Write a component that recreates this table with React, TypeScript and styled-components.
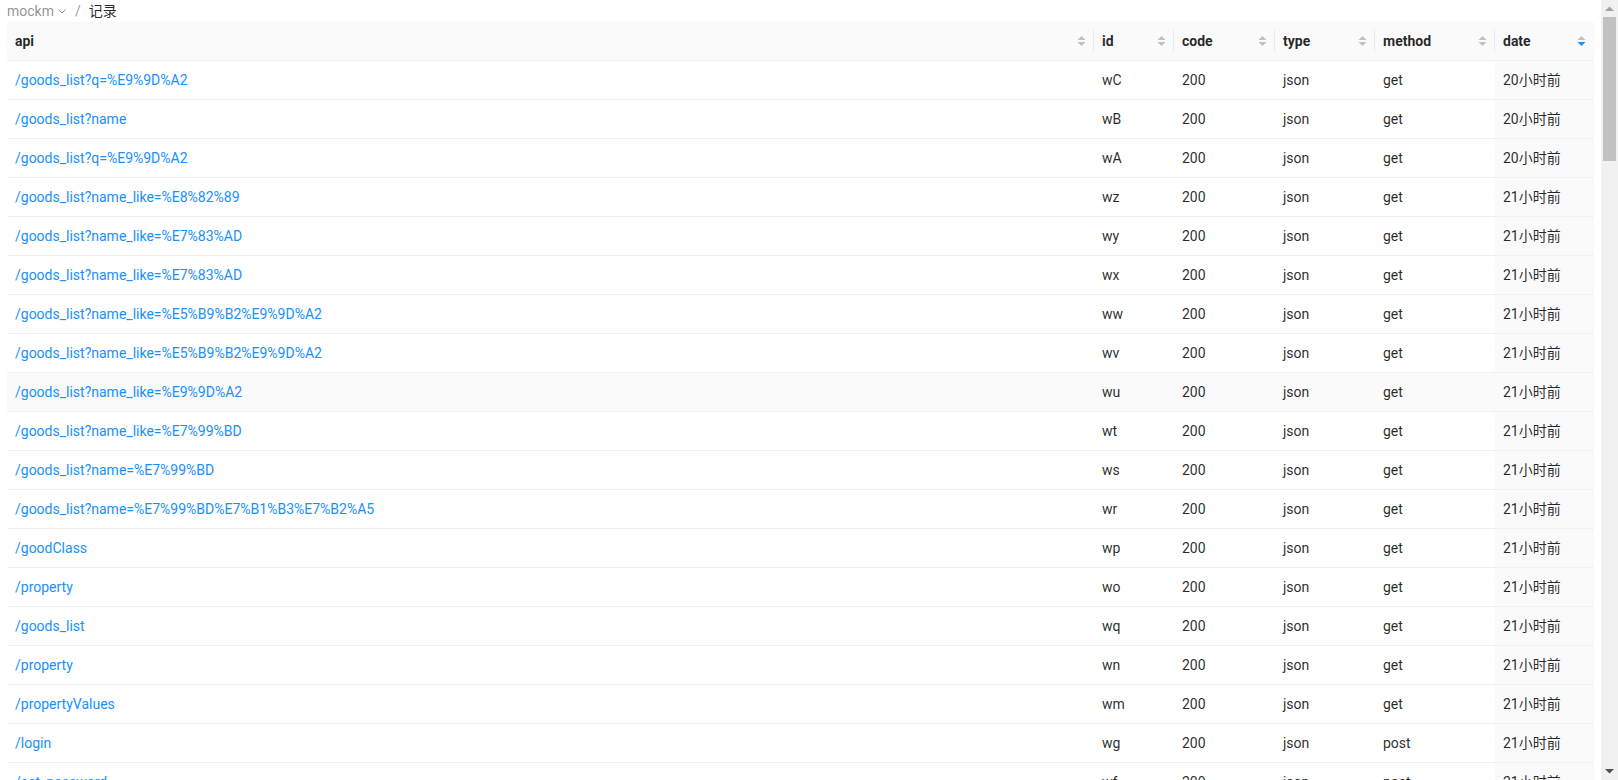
import React from "react";
import styled, { createGlobalStyle } from "styled-components";

const GlobalStyle = createGlobalStyle`
   html, body {
      margin: 0;
      padding: 0;
      background: #fff;
      overflow: hidden;
   }
   body {
      font-family: Roboto, "Noto Sans CJK SC", sans-serif;
      font-size: 14px;
      color: rgba(0, 0, 0, 0.85);
   }
`;

const Shell = styled.div`
   display: flex;
   height: 100vh;
   overflow: hidden;
`;

const Page = styled.main`
   flex: 1;
   min-width: 0;
   padding: 0 7px;
   overflow: hidden;
`;

// fake window scrollbar, the headless browser draws none
const ScrollBar = styled.div`
   width: 17px;
   flex: none;
   display: flex;
   flex-direction: column;
   background: #f1f1f1;
`;

const ScrollButton = styled.div`
   height: 17px;
   display: flex;
   align-items: center;
   justify-content: center;
`;

const ScrollTrack = styled.div`
   flex: 1;
   padding: 0 2px;
`;

const ScrollThumb = styled.div`
   height: 144px;
   background: #c1c1c1;
`;

const Crumbs = styled.div`
   display: flex;
   align-items: center;
   height: 22px;
   line-height: 22px;
   color: rgba(0, 0, 0, 0.45);
`;

const CrumbLink = styled.span`
   display: inline-flex;
   align-items: center;
   gap: 3px;
`;

const CrumbSep = styled.span`
   margin: 0 8px;
`;

const CrumbCurrent = styled.span`
   color: rgba(0, 0, 0, 0.85);
`;

const Table = styled.table`
   width: 100%;
   border-collapse: separate;
   border-spacing: 0;
   table-layout: fixed;
`;

const Th = styled.th`
   position: relative;
   padding: 8px;
   text-align: left;
   font-weight: 700;
   line-height: 22px;
   background: #fafafa;
   border-bottom: 1px solid #f0f0f0;
   &:not(:last-child)::before {
      content: "";
      position: absolute;
      top: 50%;
      right: 0;
      width: 1px;
      height: 1.6em;
      transform: translateY(-50%);
      background: rgba(0, 0, 0, 0.06);
   }
`;

const ThInner = styled.div`
   display: flex;
   align-items: center;
   justify-content: space-between;
`;

const Tr = styled.tr<{ $hover?: boolean }>`
   background: ${({ $hover }) => ($hover ? "#fafafa" : "#fff")};
`;

const Td = styled.td<{ $sorted?: boolean }>`
   padding: 8px;
   line-height: 22px;
   border-bottom: 1px solid #f0f0f0;
   white-space: nowrap;
   overflow: hidden;
   background: ${({ $sorted }) => ($sorted ? "#fafafa" : "transparent")};
`;

const ApiLink = styled.a`
   color: #1890ff;
   text-decoration: none;
`;

const Sorter = ({ active }: { active?: "asc" | "desc" }) => (
  <svg width="9" height="12" viewBox="0 0 9 12">
    <path d="M0.5 5h8L4.5 1z" fill={active === "asc" ? "#1890ff" : "#bfbfbf"} />
    <path d="M0.5 7h8l-4 4z" fill={active === "desc" ? "#1890ff" : "#bfbfbf"} />
  </svg>
);

const Chevron = () => (
  <svg width="10" height="10" viewBox="0 0 10 10">
    <path d="M1.5 3.5L5 7l3.5-3.5" fill="none" stroke="rgba(0,0,0,0.45)" strokeWidth="1" />
  </svg>
);

const Arrow = ({ dir, color }: { dir: "up" | "down"; color: string }) => (
  <svg width="9" height="5" viewBox="0 0 9 5">
    <path d={dir === "up" ? "M0 5h9L4.5 0.5z" : "M0 0h9L4.5 4.5z"} fill={color} />
  </svg>
);

type Row = { api: string; id: string; method: string; date: string };

const shown: Row[] = [
  { api: "/goods_list?q=%E9%9D%A2", id: "wC", method: "get", date: "20小时前" },
  { api: "/goods_list?name", id: "wB", method: "get", date: "20小时前" },
  { api: "/goods_list?q=%E9%9D%A2", id: "wA", method: "get", date: "20小时前" },
  { api: "/goods_list?name_like=%E8%82%89", id: "wz", method: "get", date: "21小时前" },
  { api: "/goods_list?name_like=%E7%83%AD", id: "wy", method: "get", date: "21小时前" },
  { api: "/goods_list?name_like=%E7%83%AD", id: "wx", method: "get", date: "21小时前" },
  { api: "/goods_list?name_like=%E5%B9%B2%E9%9D%A2", id: "ww", method: "get", date: "21小时前" },
  { api: "/goods_list?name_like=%E5%B9%B2%E9%9D%A2", id: "wv", method: "get", date: "21小时前" },
  { api: "/goods_list?name_like=%E9%9D%A2", id: "wu", method: "get", date: "21小时前" },
  { api: "/goods_list?name_like=%E7%99%BD", id: "wt", method: "get", date: "21小时前" },
  { api: "/goods_list?name=%E7%99%BD", id: "ws", method: "get", date: "21小时前" },
  { api: "/goods_list?name=%E7%99%BD%E7%B1%B3%E7%B2%A5", id: "wr", method: "get", date: "21小时前" },
  { api: "/goodClass", id: "wp", method: "get", date: "21小时前" },
  { api: "/property", id: "wo", method: "get", date: "21小时前" },
  { api: "/goods_list", id: "wq", method: "get", date: "21小时前" },
  { api: "/property", id: "wn", method: "get", date: "21小时前" },
  { api: "/propertyValues", id: "wm", method: "get", date: "21小时前" },
  { api: "/login", id: "wg", method: "post", date: "21小时前" },
  { api: "/set_password", id: "wf", method: "post", date: "21小时前" },
];

// older records further down the scrolled list
const olderApis = ["/goods_list", "/property", "/goodClass", "/propertyValues", "/login", "/goods_list?name"];
const rows: Row[] = [
  ...shown,
  ...Array.from({ length: 82 }, (_, i) => ({
    api: olderApis[i % olderApis.length],
    id: (i < 5 ? "w" : "v") + String.fromCharCode(101 - (i % 5) + (i < 5 ? 0 : 21) - (i >= 5 ? (i % 26) : 0)),
    method: olderApis[i % olderApis.length] === "/login" ? "post" : "get",
    date: i < 30 ? "21小时前" : "1天前",
  })),
];

const columns = [
  { key: "api", width: undefined },
  { key: "id", width: 80 },
  { key: "code", width: 101 },
  { key: "type", width: 100 },
  { key: "method", width: 120 },
  { key: "date", width: 99 },
];

export default function App() {
  return (
    <>
      <GlobalStyle />
      <Shell>
        <Page>
          <Crumbs>
            <CrumbLink>
              mockm <Chevron />
            </CrumbLink>
            <CrumbSep>/</CrumbSep>
            <CrumbCurrent>记录</CrumbCurrent>
          </Crumbs>
          <Table>
            <colgroup>
              {columns.map((c) => (
                <col key={c.key} style={c.width ? { width: c.width } : undefined} />
              ))}
            </colgroup>
            <thead>
              <tr>
                {columns.map((c) => (
                  <Th key={c.key}>
                    <ThInner>
                      <span>{c.key}</span>
                      <Sorter active={c.key === "date" ? "desc" : undefined} />
                    </ThInner>
                  </Th>
                ))}
              </tr>
            </thead>
            <tbody>
              {rows.map((r, i) => (
                <Tr key={i} $hover={i === 8}>
                  <Td>
                    <ApiLink href="#">{r.api}</ApiLink>
                  </Td>
                  <Td>{r.id}</Td>
                  <Td>200</Td>
                  <Td>json</Td>
                  <Td>{r.method}</Td>
                  <Td $sorted>{r.date}</Td>
                </Tr>
              ))}
            </tbody>
          </Table>
        </Page>
        <ScrollBar>
          <ScrollButton>
            <Arrow dir="up" color="#a3a3a3" />
          </ScrollButton>
          <ScrollTrack>
            <ScrollThumb />
          </ScrollTrack>
          <ScrollButton>
            <Arrow dir="down" color="#505050" />
          </ScrollButton>
        </ScrollBar>
      </Shell>
    </>
  );
}
